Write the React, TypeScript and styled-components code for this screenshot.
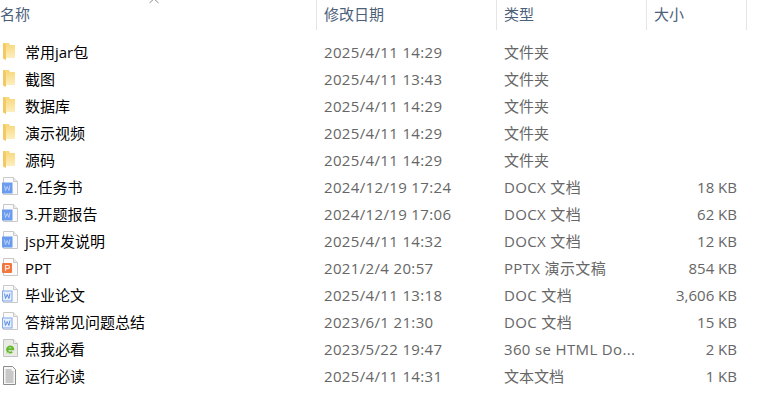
import styled, { createGlobalStyle } from 'styled-components';

type IconKind = 'folder' | 'word' | 'wordOld' | 'ppt' | 'html' | 'text';

interface FileEntry {
  name: string;
  date: string;
  type: string;
  size?: string;
  icon: IconKind;
}

const files: FileEntry[] = [
  { name: '常用jar包', date: '2025/4/11 14:29', type: '文件夹', icon: 'folder' },
  { name: '截图', date: '2025/4/11 13:43', type: '文件夹', icon: 'folder' },
  { name: '数据库', date: '2025/4/11 14:29', type: '文件夹', icon: 'folder' },
  { name: '演示视频', date: '2025/4/11 14:29', type: '文件夹', icon: 'folder' },
  { name: '源码', date: '2025/4/11 14:29', type: '文件夹', icon: 'folder' },
  { name: '2.任务书', date: '2024/12/19 17:24', type: 'DOCX 文档', size: '18 KB', icon: 'word' },
  { name: '3.开题报告', date: '2024/12/19 17:06', type: 'DOCX 文档', size: '62 KB', icon: 'word' },
  { name: 'jsp开发说明', date: '2025/4/11 14:32', type: 'DOCX 文档', size: '12 KB', icon: 'word' },
  { name: 'PPT', date: '2021/2/4 20:57', type: 'PPTX 演示文稿', size: '854 KB', icon: 'ppt' },
  { name: '毕业论文', date: '2025/4/11 13:18', type: 'DOC 文档', size: '3,606 KB', icon: 'wordOld' },
  { name: '答辩常见问题总结', date: '2023/6/1 21:30', type: 'DOC 文档', size: '15 KB', icon: 'wordOld' },
  { name: '点我必看', date: '2023/5/22 19:47', type: '360 se HTML Do...', size: '2 KB', icon: 'html' },
  { name: '运行必读', date: '2025/4/11 14:31', type: '文本文档', size: '1 KB', icon: 'text' },
];

function PageShape() {
  return (
    <>
      <path d="M1.5.5h10l4 4v13h-14z" fill="#fbfbfb" stroke="#c9c9c9" />
      <path d="M11.5.5v4h4" fill="#eeeeee" stroke="#c9c9c9" />
    </>
  );
}

function FileIcon({ kind }: { kind: IconKind }) {
  if (kind === 'folder') {
    return (
      <svg width="18" height="19" viewBox="0 0 18 19">
        <defs>
          <linearGradient id="folderFill" x1="0" y1="0" x2="0" y2="1">
            <stop offset="0" stopColor="#f7d778" />
            <stop offset="1" stopColor="#fdeebd" />
          </linearGradient>
        </defs>
        <path d="M1 1h6l1 2h5v13H1z" fill="url(#folderFill)" />
        <path d="M1 1h1.4l1.6 3v14l-3-1.6z" fill="#f4c862" />
      </svg>
    );
  }
  if (kind === 'word' || kind === 'wordOld') {
    const solid = kind === 'word';
    return (
      <svg width="18" height="19" viewBox="0 0 18 19">
        <PageShape />
        <rect x=".5" y="6" width="9.5" height="10" fill={solid ? '#6a9bee' : '#e8effc'} stroke={solid ? '#6a9bee' : '#7fa7ea'} />
        <path d="M2.5 8.5l1 5 1.7-4 1.7 4 1-5" fill="none" stroke={solid ? '#b9d0f7' : '#5a8de3'} strokeWidth="1" />
      </svg>
    );
  }
  if (kind === 'ppt') {
    return (
      <svg width="18" height="19" viewBox="0 0 18 19">
        <PageShape />
        <rect x="0" y="5" width="10" height="10" rx="1" fill="#f3763f" />
        <path d="M3.5 13V7.5h2.4a1.5 1.5 0 0 1 0 3.2H3.5" fill="none" stroke="#fde3d7" strokeWidth="1.2" />
      </svg>
    );
  }
  if (kind === 'html') {
    return (
      <svg width="18" height="19" viewBox="0 0 18 19">
        <path d="M1.5.5h10l4 4v13h-14z" fill="#ebebe6" stroke="#c2c2c2" />
        <path d="M11.5.5v4h4" fill="#f5f5f5" stroke="#c2c2c2" />
        <path d="M5 10.2h6.2a3.1 3.1 0 1 0-1 2.6" fill="none" stroke="#62b82c" strokeWidth="1.9" />
        <path d="M4 14.5c1-1.2 2-1 3-.8" fill="none" stroke="#a5d86f" strokeWidth="1" />
      </svg>
    );
  }
  return (
    <svg width="18" height="19" viewBox="0 0 18 19">
      <path d="M1.5.5h9l3 3v15h-12z" fill="#f6f6f6" stroke="#8c8c8c" />
      <path d="M3.5 4h6M3.5 6h8M3.5 8h8M3.5 10h8M3.5 12h8M3.5 14h8M3.5 16h8" stroke="#9a9a9a" strokeWidth="1" />
    </svg>
  );
}

export default function App() {
  return (
    <>
      <GlobalStyle />
      <Explorer>
        <SortCaret width="14" height="6" viewBox="0 0 14 6">
          <path d="M2.5 5L7 .8 11.5 5" fill="none" stroke="#8a8a8a" strokeWidth="1" />
        </SortCaret>
        <HeaderRow>
          <HeaderCell>名称</HeaderCell>
          <HeaderCell $inset>修改日期</HeaderCell>
          <HeaderCell $inset>类型</HeaderCell>
          <HeaderCell $inset>大小</HeaderCell>
        </HeaderRow>
        <FileList>
          {files.map((file) => (
            <FileRow key={file.name}>
              <NameCell>
                <IconSlot>
                  <FileIcon kind={file.icon} />
                </IconSlot>
                {file.name}
              </NameCell>
              <MetaCell $spaced>{file.date}</MetaCell>
              <MetaCell $spaced={/[A-Za-z]/.test(file.type)}>{file.type}</MetaCell>
              <SizeCell>{file.size}</SizeCell>
            </FileRow>
          ))}
        </FileList>
      </Explorer>
    </>
  );
}

const GlobalStyle = createGlobalStyle`
  html, body {
    margin: 0;
    background: #ffffff;
  }
`;

const columns = '317px 180px 150px 100px';

const Explorer = styled.div`
  position: relative;
  width: 784px;
  height: 406px;
  overflow: hidden;
  font-family: 'Open Sans', 'Noto Sans CJK SC', sans-serif;
  font-size: 15px;
  line-height: 20px;
`;

const SortCaret = styled.svg`
  position: absolute;
  left: 147px;
  top: -2px;
`;

const HeaderRow = styled.div`
  display: grid;
  grid-template-columns: ${columns};
  height: 30px;
`;

const HeaderCell = styled.div<{ $inset?: boolean }>`
  display: flex;
  align-items: center;
  padding-left: ${({ $inset }) => ($inset ? '7px' : '0')};
  padding-bottom: 2px;
  color: #4c607a;
  border-right: 1px solid #e5e5e5;
`;

const FileList = styled.div`
  display: flex;
  flex-direction: column;
  padding-top: 9px;
`;

const FileRow = styled.div`
  display: grid;
  grid-template-columns: ${columns};
  box-sizing: border-box;
  height: 27px;
  padding-bottom: 2px;
  align-items: center;
`;

const NameCell = styled.div`
  display: flex;
  align-items: center;
  padding-left: 2px;
  color: #000000;
  white-space: nowrap;
`;

const IconSlot = styled.span`
  display: flex;
  width: 18px;
  height: 19px;
  margin-right: 5px;
  margin-top: -1px;
`;

const MetaCell = styled.div<{ $spaced?: boolean }>`
  padding-left: 7px;
  color: #666666;
  white-space: nowrap;
  letter-spacing: ${({ $spaced }) => ($spaced ? '0.35px' : '0')};
`;

const SizeCell = styled(MetaCell)`
  padding: 0 10px 0 0;
  text-align: right;
`;
